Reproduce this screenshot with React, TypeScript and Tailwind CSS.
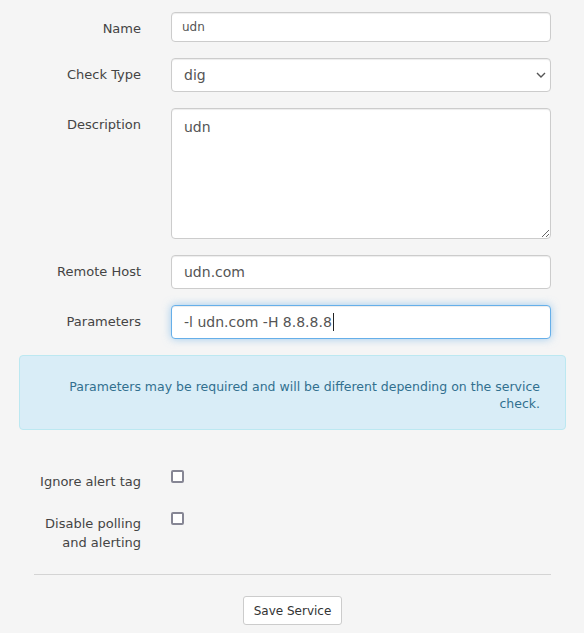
import { ReactNode } from 'react'

const inputBase =
  'block w-full rounded-[4px] border border-[#cccccc] bg-white text-[#555555] shadow-[inset_0_1px_1px_rgba(0,0,0,0.075)] outline-none'

function FormRow({ label, children }: { label: ReactNode; children: ReactNode }) {
  return (
    <div className="mb-4 flex">
      <label className="w-[137px] shrink-0 pt-[7px] pr-[15px] text-right text-[13px] leading-[19px] text-[#444444]">
        {label}
      </label>
      <div className="flex-1 px-[15px]">{children}</div>
    </div>
  )
}

function CheckRow({ label }: { label: ReactNode }) {
  return (
    <div className="mb-4 flex">
      <label className="w-[137px] shrink-0 pt-[7px] pr-[15px] text-right text-[13px] leading-[19px] text-[#444444]">
        {label}
      </label>
      <div className="flex-1 px-[15px]">
        <div className="mt-[5px] h-[13px] w-[13px] rounded-[2px] border-2 border-[#868694] bg-white" />
      </div>
    </div>
  )
}

export default function App() {
  return (
    <main
      className="min-h-screen bg-[#f5f5f5] pt-3 pr-[18px] pl-[19px]"
      style={{ fontFamily: '"DejaVu Sans", Verdana, sans-serif' }}
    >
      <FormRow label="Name">
        <input
          readOnly
          value="udn"
          className={`${inputBase} h-[30px] px-[10px] text-[12px]`}
        />
      </FormRow>

      <FormRow label="Check Type">
        <div className="relative">
          <select
            disabled
            defaultValue="dig"
            className={`${inputBase} h-[34px] appearance-none bg-[#eeeeee] px-3 text-[14px] opacity-100`}
          >
            <option value="dig">dig</option>
          </select>
          <svg
            className="pointer-events-none absolute top-[14px] right-[5px]"
            width="10"
            height="7"
            viewBox="0 0 10 7"
            fill="none"
          >
            <polyline points="1,1 5,5 9,1" stroke="#555555" strokeWidth="1.4" />
          </svg>
        </div>
      </FormRow>

      <FormRow label="Description">
        <textarea
          readOnly
          value="udn"
          className={`${inputBase} h-[131px] px-3 pt-[8px] pb-[6px] text-[14px] leading-[20px]`}
        />
      </FormRow>

      <FormRow label="Remote Host">
        <input
          readOnly
          value="udn.com"
          className={`${inputBase} h-[34px] px-3 text-[14px]`}
        />
      </FormRow>

      <FormRow label="Parameters">
        <div className="flex h-[34px] w-full items-center rounded-[4px] border border-[#66afe9] bg-white px-3 text-[14px] text-[#555555] shadow-[inset_0_1px_1px_rgba(0,0,0,0.075),0_0_8px_rgba(102,175,233,0.6)]">
          <span>-l udn.com -H 8.8.8.8</span>
          <span className="ml-px h-[18px] w-px bg-[#222222]" />
        </div>
      </FormRow>

      <div className="mb-[35px] rounded-[4px] border border-[#bce8f1] bg-[#d9edf7] pt-[22px] pr-[25px] pb-[17px] pl-[35px] text-right text-[12.5px] leading-[17px] text-[#31708f]">
        Parameters may be required and will be different depending on the service check.
      </div>

      <CheckRow label="Ignore alert tag" />
      <CheckRow
        label={
          <>
            Disable polling
            <br />
            and alerting
          </>
        }
      />

      <hr className="mx-[15px] mt-[22px] border-t border-[#d4d4d4]" />

      <div className="flex justify-center pt-[21px]">
        <button className="h-[29px] rounded-[3px] border border-[#cccccc] bg-white px-[10px] text-[12px] text-[#333333]">
          Save Service
        </button>
      </div>
    </main>
  )
}
